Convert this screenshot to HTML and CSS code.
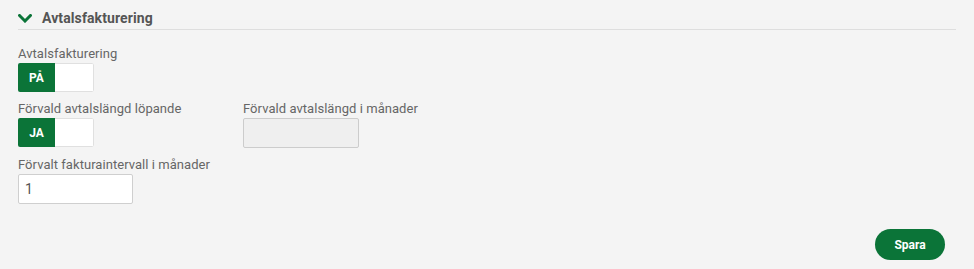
FILE: index.html
```html
<!DOCTYPE html>
<html lang="sv">
<head>
<meta charset="utf-8">
<title>Avtalsfakturering</title>
<link rel="stylesheet" href="styles.css">
</head>
<body>
<div class="page">
  <div class="section-header">
    <svg class="chevron" width="14" height="9" viewBox="0 0 14 9"><path d="M1.5 1.5 L7 7 L12.5 1.5" fill="none" stroke="#0b7438" stroke-width="3" stroke-linecap="square"/></svg>
    <span class="section-title">Avtalsfakturering</span>
  </div>
  <div class="form">
    <div class="field">
      <label class="label">Avtalsfakturering</label>
      <div class="toggle"><span class="toggle-on">PÅ</span><span class="toggle-off"></span></div>
    </div>
    <div class="row">
      <div class="field col1">
        <label class="label">Förvald avtalslängd löpande</label>
        <div class="toggle"><span class="toggle-on">JA</span><span class="toggle-off"></span></div>
      </div>
      <div class="field">
        <label class="label">Förvald avtalslängd i månader</label>
        <input class="input input-disabled" type="text" disabled>
      </div>
    </div>
    <div class="field">
      <label class="label">Förvalt fakturaintervall i månader</label>
      <input class="input" type="text" value="1">
    </div>
  </div>
  <div class="actions">
    <button class="btn-save">Spara</button>
  </div>
</div>
</body>
</html>
```
FILE: styles.css
```css
html, body {
  margin: 0;
  padding: 0;
  background: #f4f4f4;
  font-family: Roboto, "Liberation Sans", sans-serif;
}
.page {
  padding: 0 18px;
}
.section-header {
  display: flex;
  align-items: center;
  gap: 10px;
  height: 22px;
  padding-top: 7px;
  border-bottom: 1px solid #dedede;
}
.chevron {
  display: block;
}
.section-title {
  font-size: 14px;
  font-weight: 700;
  color: #555;
  letter-spacing: 0.1px;
}
.form {
  display: flex;
  flex-direction: column;
  gap: 9px;
  padding-top: 16px;
}
.row {
  display: flex;
}
.col1 {
  width: 225px;
}
.field {
  display: flex;
  flex-direction: column;
  gap: 2px;
}
.label {
  font-size: 13px;
  line-height: 15px;
  color: #666;
  letter-spacing: 0.05px;
}
.toggle {
  display: flex;
  width: 76px;
  height: 29px;
  border-radius: 2px;
  overflow: hidden;
}
.toggle-on {
  width: 37px;
  background: #0b7438;
  color: #fff;
  font-size: 12px;
  font-weight: 700;
  display: flex;
  align-items: center;
  justify-content: center;
}
.toggle-off {
  flex: 1;
  background: #fff;
  border: 1px solid #e0e0e0;
  border-left: none;
  border-radius: 0 2px 2px 0;
}
.input {
  box-sizing: border-box;
  width: 115px;
  height: 30px;
  border: 1px solid #cfcfcf;
  border-radius: 2px;
  background: #fff;
  font-family: Roboto, "Liberation Sans", sans-serif;
  font-size: 14px;
  color: #555;
  padding: 0 6px;
  margin: 0;
}
.input-disabled {
  width: 116px;
  background: #efefef;
  border-color: #cccccc;
}
.actions {
  display: flex;
  justify-content: flex-end;
  padding: 25px 11px 0 0;
}
.btn-save {
  width: 70px;
  height: 31px;
  border: none;
  border-radius: 16px;
  background: #0b7438;
  color: #fff;
  font-family: Roboto, "Liberation Sans", sans-serif;
  font-size: 12px;
  font-weight: 700;
  padding: 0;
}
```
